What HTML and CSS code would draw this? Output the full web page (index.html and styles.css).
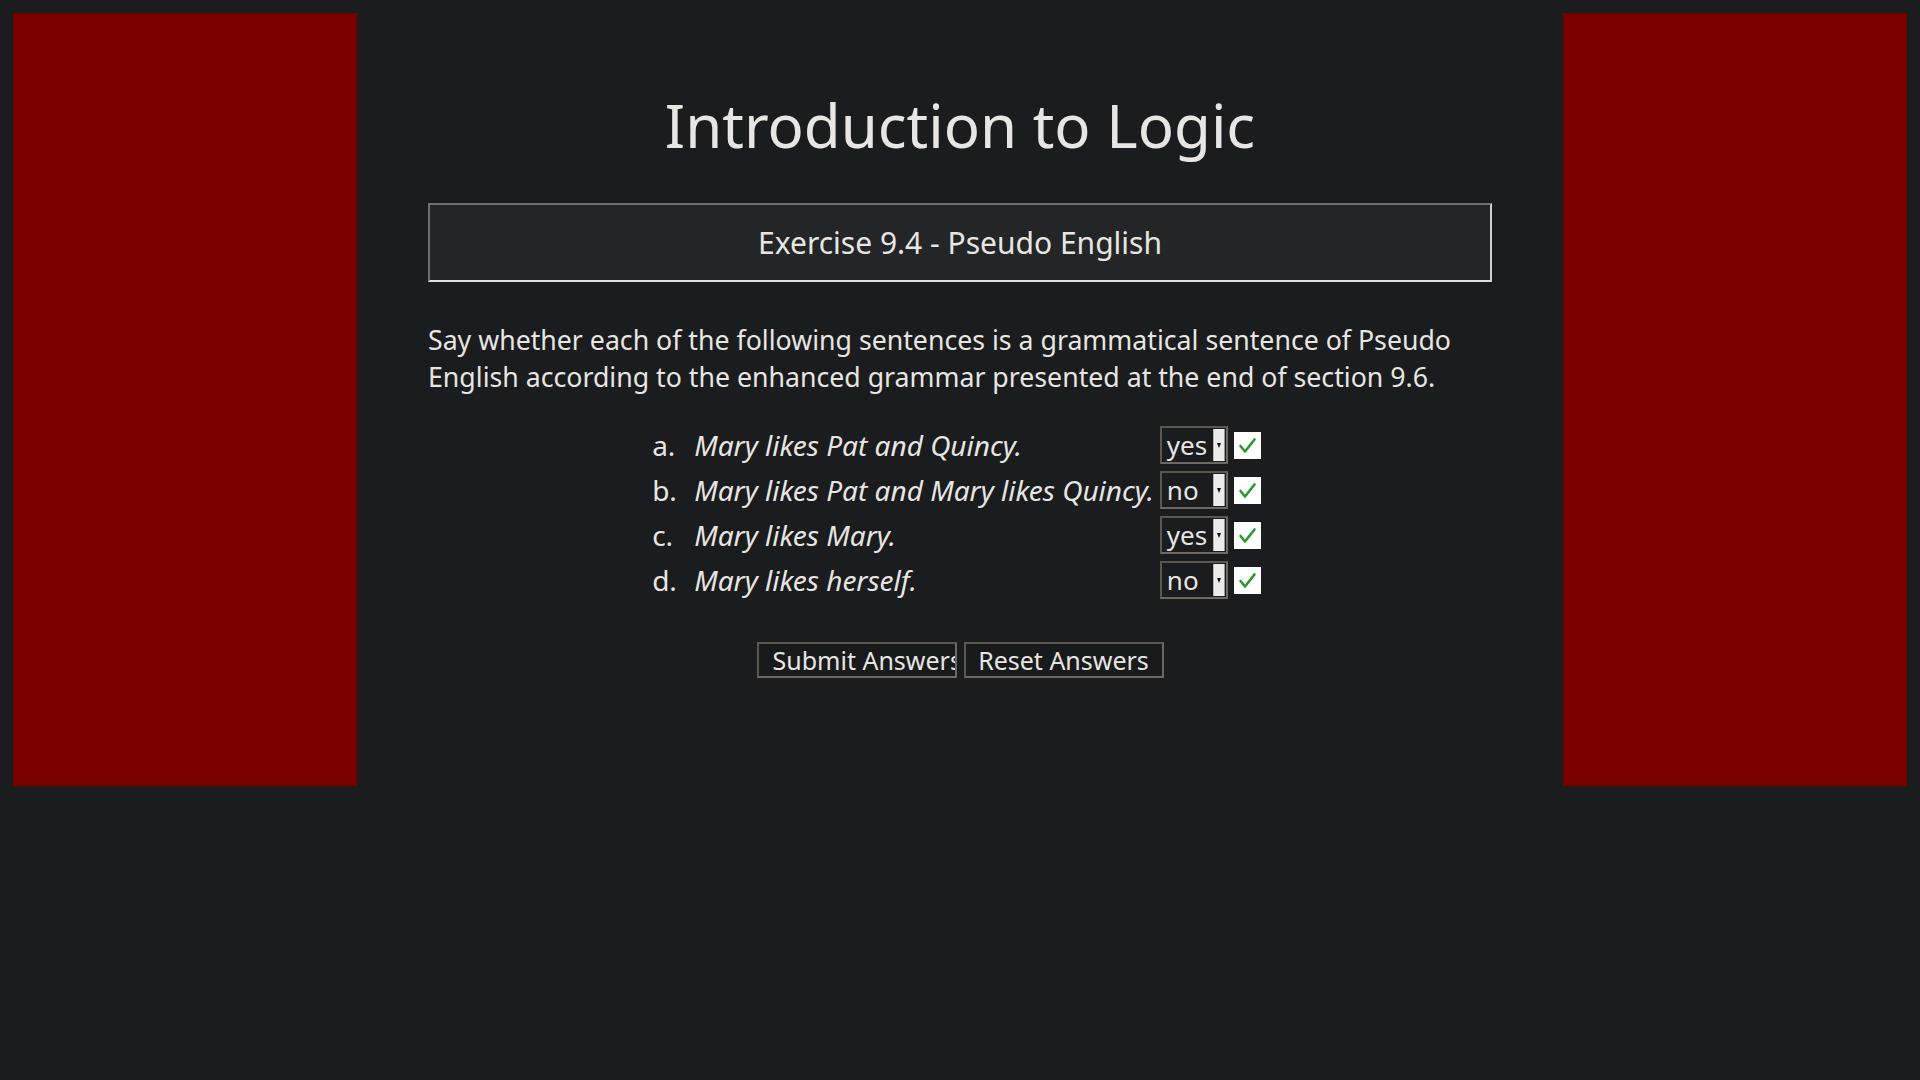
FILE: index.html
```html
<!DOCTYPE html>
<html>
<head>
<meta charset="utf-8">
<link rel="stylesheet" href="styles.css">
</head>
<body>
<div class="page">
  <div class="side"></div>
  <div class="main">
    <h1 class="title">Introduction to Logic</h1>
    <div class="exbox">Exercise 9.4 - Pseudo English</div>
    <p class="intro">Say whether each of the following sentences is a grammatical sentence of Pseudo English according to the enhanced grammar presented at the end of section 9.6.</p>
    <table class="qs">
      <tr>
        <td class="lbl">a.</td>
        <td class="sent">Mary likes Pat and Quincy.</td>
        <td class="ans"><span class="sel"><span class="val">yes</span><span class="arr"><span class="tri"></span></span></span></td>
        <td class="chk"><span class="box"><svg viewBox="0 0 27 27" width="27" height="27"><path d="M6.5 14 L11 19.5 L20.5 7.5" fill="none" stroke="#2a9a2a" stroke-width="2.6" stroke-linecap="round" stroke-linejoin="round"/></svg></span></td>
      </tr>
      <tr>
        <td class="lbl">b.</td>
        <td class="sent">Mary likes Pat and Mary likes Quincy.</td>
        <td class="ans"><span class="sel"><span class="val">no</span><span class="arr"><span class="tri"></span></span></span></td>
        <td class="chk"><span class="box"><svg viewBox="0 0 27 27" width="27" height="27"><path d="M6.5 14 L11 19.5 L20.5 7.5" fill="none" stroke="#2a9a2a" stroke-width="2.6" stroke-linecap="round" stroke-linejoin="round"/></svg></span></td>
      </tr>
      <tr>
        <td class="lbl">c.</td>
        <td class="sent">Mary likes Mary.</td>
        <td class="ans"><span class="sel"><span class="val">yes</span><span class="arr"><span class="tri"></span></span></span></td>
        <td class="chk"><span class="box"><svg viewBox="0 0 27 27" width="27" height="27"><path d="M6.5 14 L11 19.5 L20.5 7.5" fill="none" stroke="#2a9a2a" stroke-width="2.6" stroke-linecap="round" stroke-linejoin="round"/></svg></span></td>
      </tr>
      <tr>
        <td class="lbl">d.</td>
        <td class="sent">Mary likes herself.</td>
        <td class="ans"><span class="sel"><span class="val">no</span><span class="arr"><span class="tri"></span></span></span></td>
        <td class="chk"><span class="box"><svg viewBox="0 0 27 27" width="27" height="27"><path d="M6.5 14 L11 19.5 L20.5 7.5" fill="none" stroke="#2a9a2a" stroke-width="2.6" stroke-linecap="round" stroke-linejoin="round"/></svg></span></td>
      </tr>
    </table>
    <div class="buttons">
      <button class="btn">Submit Answers</button>
      <button class="btn">Reset Answers</button>
    </div>
  </div>
  <div class="side"></div>
</div>
</body>
</html>
```
FILE: styles.css
```css
html, body {
  margin: 0;
  padding: 0;
  background: #1a1c1e;
}
body {
  font-family: "Noto Sans", "Open Sans", sans-serif;
  color: #e8e6e3;
}
.page {
  display: flex;
  padding: 13px;
  height: 773px;
}
.side {
  width: 344px;
  flex: none;
  background: #7a0000;
}
.main {
  flex: 1;
  padding: 0 71px;
}
.title {
  margin: 72px 0 0;
  font-weight: 400;
  font-size: 60px;
  line-height: 80px;
  text-align: center;
}
.exbox {
  margin-top: 38px;
  height: 75px;
  border: 2px solid;
  border-color: #6e6e6e #cfcfcf #e0e0e0 #6e6e6e;
  background: #232527;
  font-size: 30px;
  line-height: 75px;
  text-align: center;
}
.intro {
  margin: 39px 0 0;
  font-size: 26.7px;
  line-height: 37px;
}
.qs {
  margin: 24px auto 0;
  border-collapse: separate;
  border-spacing: 0 7px;
  font-size: 28px;
}
.qs td {
  padding: 0;
  vertical-align: middle;
  line-height: 38px;
}
.lbl {
  width: 42px;
}
.sent {
  font-style: italic;
  padding-right: 6px !important;
  white-space: nowrap;
}
.sel {
  display: flex;
  width: 64px;
  height: 34px;
  border: 2px solid;
  border-color: #5b564e #6e6860 #6e6860 #5b564e;
  background: #1a1c1e;
}
.val {
  flex: 1;
  padding-left: 5px;
  line-height: 34px;
  font-size: 26px;
}
.arr {
  width: 10px;
  margin: 1px 1px 1px 0;
  background: #ececec;
  border-left: 1px solid #b0b0b0;
  border-right: 1px solid #9a9a9a;
  display: flex;
  justify-content: center;
  align-items: center;
}
.tri {
  width: 0;
  height: 0;
  border-left: 2px solid transparent;
  border-right: 2px solid transparent;
  border-top: 5px solid #111;
}
.chk {
  padding-left: 6px !important;
  padding-right: 7px !important;
}
.box {
  display: block;
  width: 27px;
  height: 27px;
  background: #ffffff;
}
.box svg {
  display: block;
}
.buttons {
  margin-top: 36px;
  display: flex;
  justify-content: center;
  gap: 7px;
}
.btn {
  width: 200px;
  height: 36px;
  padding: 0 0 0 14px;
  border: 2px solid;
  border-color: #5b564e #6e6860 #6e6860 #5b564e;
  background: #181a1b;
  color: #e8e6e3;
  font-family: "Noto Sans", "Open Sans", sans-serif;
  font-size: 25px;
  line-height: 32px;
  text-align: left;
  white-space: nowrap;
  overflow: hidden;
}
.btn + .btn {
  text-align: center;
  padding: 0;
}
```
